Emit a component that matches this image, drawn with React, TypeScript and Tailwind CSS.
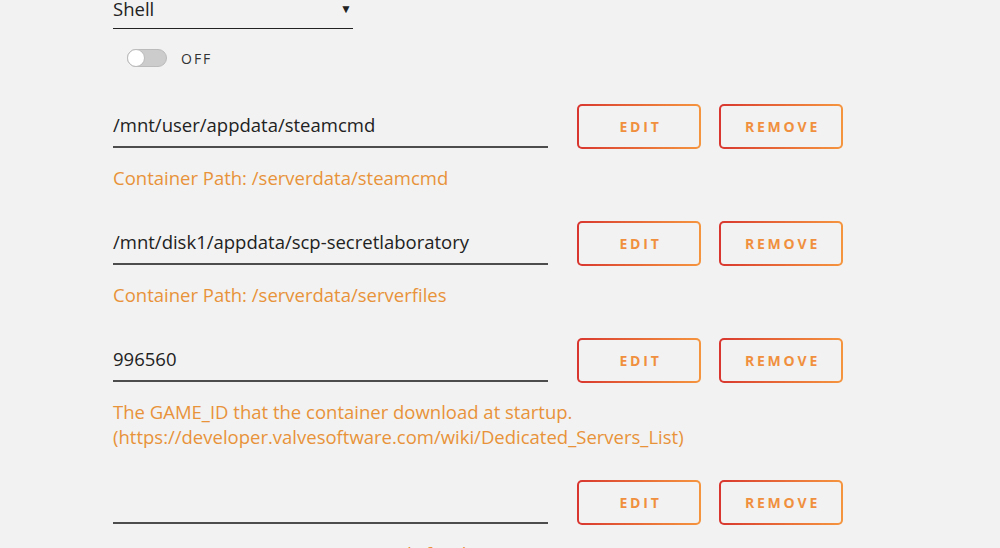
const rows = [
  { host: "/mnt/user/appdata/steamcmd", desc: ["Container Path: /serverdata/steamcmd"] },
  { host: "/mnt/disk1/appdata/scp-secretlaboratory", desc: ["Container Path: /serverdata/serverfiles"] },
  {
    host: "996560",
    desc: [
      "The GAME_ID that the container download at startup.",
      "(https://developer.valvesoftware.com/wiki/Dedicated_Servers_List)",
    ],
  },
  { host: "", desc: ["Enter your extra startup commands for the server"] },
];

const GradButton = ({ label }: { label: string }) => (
  <div className="w-[124px] h-[45px] rounded-[5px] p-[2px] bg-gradient-to-r from-[#d8352f] to-[#f5953f]">
    <button className="w-full h-full rounded-[3px] bg-[#f2f2f2] flex items-center justify-center text-[14px] font-bold tracking-[2.8px] text-[#f0903f] pl-[3px]">
      {label}
    </button>
  </div>
);

export default function App() {
  return (
    <div
      className="w-[1000px] h-[548px] overflow-hidden bg-[#f2f2f2] text-[#222]"
      style={{ fontFamily: '"Open Sans", "Noto Sans", sans-serif' }}
    >
      <div className="pl-[113px] mt-[-10px]">
        <div className="w-[240px] flex items-center justify-between border-b border-[#222] h-[39px] text-[18.5px]">
          <span>Shell</span>
          <span className="text-[12px] mr-[1px]">▼</span>
        </div>

        <div className="flex items-center mt-[20px] ml-[14px] h-[18px]">
          <div className="w-[40px] h-[18px] rounded-full bg-[#cccccc] border border-[#bbbbbb] flex items-center">
            <div className="w-[18px] h-[18px] -ml-[1px] rounded-full bg-white border border-[#bbbbbb]" />
          </div>
          <span className="ml-[14px] text-[14px] tracking-[2px] text-[#333]">OFF</span>
        </div>

        <div className="mt-[36px] flex flex-col">
          {rows.map((r, i) => (
            <div key={i} className="mb-[30px]">
              <div className="flex items-end">
                <div className="w-[435px] h-[45px] border-b-2 border-[#4d4d4d] flex items-center text-[18.5px] pt-[1px] mb-[1px]">
                  {r.host}
                </div>
                <div className="ml-[29px] flex gap-[18px]">
                  <GradButton label="EDIT" />
                  <GradButton label="REMOVE" />
                </div>
              </div>
              <div className="mt-[16px] text-[18.5px] leading-[25px] text-[#e8923a]">
                {r.desc.map((d, j) => (
                  <div key={j}>{d}</div>
                ))}
              </div>
            </div>
          ))}
        </div>
      </div>
    </div>
  );
}
